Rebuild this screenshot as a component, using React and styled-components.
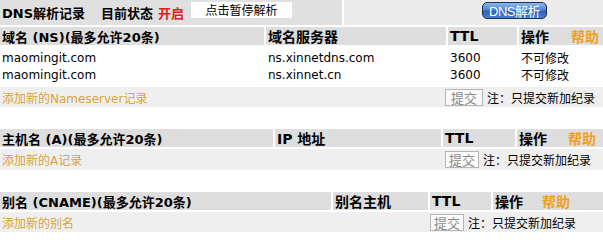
import React from "react";
import styled, { createGlobalStyle } from "styled-components";

const Global = createGlobalStyle`
  html, body { margin: 0; padding: 0; background: #fff; }
  body { font-family: "DejaVu Sans", "Noto Sans CJK SC", sans-serif; font-size: 12px; color: #000; }
`;

const Page = styled.div`
  width: 603px;
  height: 237px;
  overflow: hidden;
  background: #fff;
`;

const TopBar = styled.div`
  display: grid;
  grid-template-columns: 342px 1fr;
  column-gap: 2px;
  height: 25px;
`;

const TopLeft = styled.div`
  background: #e0e0e0;
  display: flex;
  align-items: center;
  padding-left: 2px;
  font-weight: bold;
  font-size: 13px;
`;

const TopRight = styled.div`
  background: #ececec;
  display: flex;
  align-items: flex-start;
  padding-top: 2px;
  padding-left: 138px;
`;

const Label = styled.span`
  margin-right: ${(p) => p.$gap || 0}px;
  color: ${(p) => p.$color || "#000"};
  white-space: nowrap;
`;

const PauseButton = styled.div`
  width: 101px;
  height: 16px;
  background: #fff;
  font-weight: normal;
  font-size: 12px;
  display: flex;
  align-items: center;
  justify-content: center;
  margin-top: -6px;
`;

const DnsButton = styled.div`
  width: 63px;
  height: 15px;
  border: 1px solid #1d2f5a;
  border-radius: 5px;
  background: linear-gradient(#8fb7ee 0%, #4f86d9 45%, #2e62b8 55%, #4b7fd0 100%);
  color: #fff;
  font-family: "Liberation Sans", "Noto Sans CJK SC", sans-serif;
  font-size: 13px;
  display: flex;
  align-items: center;
  justify-content: center;
  letter-spacing: -0.5px;
`;

const Section = styled.div`
  margin-top: ${(p) => p.$top}px;
`;

const Row = styled.div`
  display: grid;
  grid-template-columns: ${(p) => p.$cols};
  column-gap: 2px;
  height: ${(p) => p.$h}px;
  background: ${(p) => p.$bg || "transparent"};
  margin-top: ${(p) => p.$mt || 0}px;
`;

const HeadCell = styled.div`
  background: #dedede;
  font-weight: bold;
  font-size: ${(p) => p.$size || 14}px;
  display: flex;
  align-items: center;
  padding-left: 2px;
  white-space: nowrap;
  overflow: hidden;
`;

const Help = styled.span`
  color: #f0a020;
  margin-left: ${(p) => p.$gap}px;
`;

const Cell = styled.div`
  display: flex;
  align-items: center;
  padding-left: 2px;
  white-space: nowrap;
  font-size: 12px;
`;

const AddLink = styled.span`
  color: #d8a43c;
  font-size: 12px;
`;

const Submit = styled.div`
  border: 1px solid #b5b5b5;
  background: #fafafa;
  color: #8a8a8a;
  font-size: 13px;
  height: 15px;
  padding: 0 ${(p) => p.$pad}px;
  display: flex;
  align-items: center;
  margin-left: ${(p) => p.$shift}px;
  margin-right: 4px;
`;

const Note = styled.span`
  font-size: 12px;
`;

function HeaderRow({ cols, labels, helpGap }) {
  return (
    <Row $cols={cols} $h={18} $mt={2}>
      {labels.map((l, i) =>
        i === labels.length - 1 ? (
          <HeadCell key={i}>
            <span>{l}</span>
            <Help $gap={helpGap}>帮助</Help>
          </HeadCell>
        ) : (
          <HeadCell key={i} $size={i === 0 ? 13 : 14}>
            {l}
          </HeadCell>
        )
      )}
    </Row>
  );
}

function AddRow({ cols, text, mt, h, shift, pad }) {
  return (
    <Row $cols={cols} $h={h || 20} $bg="#efefef" $mt={mt}>
      <Cell style={{ gridColumn: "1 / span 2" }}>
        <AddLink>{text}</AddLink>
      </Cell>
      <Cell style={{ gridColumn: "3 / -1" }}>
        <Submit $shift={shift} $pad={pad}>提交</Submit>
        <Note>注：只提交新加纪录</Note>
      </Cell>
    </Row>
  );
}

const DataBlock = styled.div`
  margin-top: 4px;
`;

const ns = [
  ["maomingit.com", "ns.xinnetdns.com", "3600", "不可修改"],
  ["maomingit.com", "ns.xinnet.cn", "3600", "不可修改"],
];

const cols1 = "264px 180px 69px 1fr";
const cols2 = "273px 166px 72px 1fr";
const cols3 = "331px 95px 61px 1fr";

export default function App() {
  return (
    <Page>
      <Global />
      <TopBar>
        <TopLeft>
          <Label $gap={16}>DNS解析记录</Label>
          <Label $gap={5}>目前状态</Label>
          <Label $gap={7} $color="#e02020">开启</Label>
          <PauseButton>点击暂停解析</PauseButton>
        </TopLeft>
        <TopRight>
          <DnsButton>DNS解析</DnsButton>
        </TopRight>
      </TopBar>

      <Section $top={0}>
        <HeaderRow cols={cols1} helpGap={22} labels={["域名 (NS)(最多允许20条)", "域名服务器", "TTL", "操作"]} />
        <DataBlock>
          {ns.map((r, i) => (
            <Row key={i} $cols={cols1} $h={17}>
              {r.map((c, j) => (
                <Cell key={j}>{c}</Cell>
              ))}
            </Row>
          ))}
        </DataBlock>
        <AddRow cols={cols1} text="添加新的Nameserver记录" mt={4} shift={-5} pad={5} />
      </Section>

      <Section $top={22}>
        <HeaderRow cols={cols2} helpGap={21} labels={["主机名 (A)(最多允许20条)", "IP 地址", "TTL", "操作"]} />
        <AddRow cols={cols2} text="添加新的A记录" mt={2} h={21} shift={0} pad={3} />
      </Section>

      <Section $top={22}>
        <HeaderRow cols={cols3} helpGap={19} labels={["别名 (CNAME)(最多允许20条)", "别名主机", "TTL", "操作"]} />
        <AddRow cols={cols3} text="添加新的别名" mt={2} shift={-2} pad={3} />
      </Section>
    </Page>
  );
}
